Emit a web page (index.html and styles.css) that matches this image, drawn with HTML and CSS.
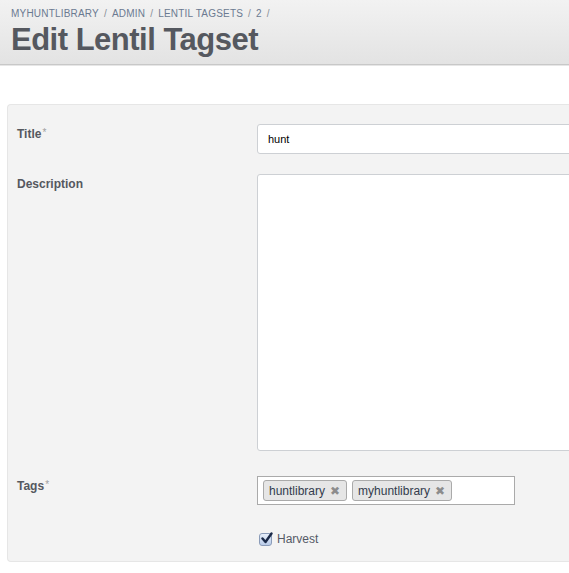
FILE: index.html
```html
<!DOCTYPE html>
<html>
<head>
<meta charset="utf-8">
<link rel="stylesheet" href="styles.css">
</head>
<body>
<header class="page-header">
  <nav class="breadcrumb">
    <a>MYHUNTLIBRARY</a><span class="sep">/</span><a>ADMIN</a><span class="sep">/</span><a>LENTIL TAGSETS</a><span class="sep">/</span><a>2</a><span class="sep">/</span>
  </nav>
  <h1 class="title">Edit Lentil Tagset</h1>
</header>
<main class="content">
  <form class="panel">
    <div class="row row-title">
      <label class="label">Title<span class="req">*</span></label>
      <div class="field"><div class="input">hunt</div></div>
    </div>
    <div class="row row-desc">
      <label class="label">Description</label>
      <div class="field"><div class="textarea"></div></div>
    </div>
    <div class="row row-tags">
      <label class="label">Tags<span class="req">*</span></label>
      <div class="field">
        <div class="tagbox">
          <span class="tag">huntlibrary<span class="x">✖</span></span>
          <span class="tag">myhuntlibrary<span class="x">✖</span></span>
        </div>
        <label class="check">
          <span class="box"><svg width="13" height="13" viewBox="0 0 13 13"><path d="M2.5 6.5 L5.5 10 L11.5 1.5" fill="none" stroke="#1a2a48" stroke-width="2.4" stroke-linecap="round" stroke-linejoin="round"/></svg></span>
          Harvest
        </label>
      </div>
    </div>
  </form>
</main>
</body>
</html>
```
FILE: styles.css
```css
* { box-sizing: border-box; }
html, body { margin: 0; padding: 0; background: #fff; }
body { font-family: "Liberation Sans", Arial, sans-serif; width: 569px; height: 573px; overflow: hidden; }
.page-header {
  height: 65px;
  background: linear-gradient(#f2f2f2, #e3e3e3);
  border-bottom: 1px solid #c8c8c8;
  box-shadow: 0 1px 0 #e6e6e6;
  padding: 8px 0 0 11px;
}
.breadcrumb { font-size: 10px; color: #6b7a91; line-height: 12px; letter-spacing: 0.2px; }
.breadcrumb .sep { margin: 0 5px; color: #8a8f97; }
.title {
  margin: 2px 0 0 0;
  font-size: 31px;
  font-weight: bold;
  color: #55585f;
  line-height: 36px;
  letter-spacing: -0.5px;
}
.content { padding: 39px 0 0 7px; }
.panel {
  background: #f3f3f3;
  border: 1px solid #e6e6e6;
  border-right: none;
  border-radius: 4px 0 0 4px;
  width: 600px;
  height: 458px;
  padding: 19px 0 0 9px;
}
.row { display: flex; }
.label {
  width: 240px;
  font-size: 12px;
  font-weight: bold;
  color: #55585f;
  padding-top: 3px;
}
.req { color: #a0a0a0; font-weight: normal; font-size: 10px; vertical-align: top; margin-left: 1px; }
.field { flex: 1; }
.input {
  height: 30px;
  background: #fff;
  border: 1px solid #cdd0d4;
  border-radius: 3px 0 0 3px;
  font-size: 11px;
  color: #000;
  padding: 8px 0 0 10px;
}
.row-desc { margin-top: 20px; }
.textarea {
  height: 277px;
  background: #fff;
  border: 1px solid #cdd0d4;
  border-radius: 3px 0 0 3px;
}
.row-tags { margin-top: 25px; }
.tagbox {
  width: 258px;
  height: 29px;
  background: #fff;
  border: 1px solid #aaa;
  padding: 3px 5px;
  display: flex;
  gap: 5px;
}
.tag {
  height: 21px;
  background: #e6e6e6;
  border: 1px solid #aaa;
  border-radius: 3px;
  font-size: 12px;
  color: #333c4d;
  padding: 3px 6px 0 5px;
  line-height: 14px;
  white-space: nowrap;
}
.tag .x { color: #8c8c8c; font-size: 12px; margin-left: 5px; }
.check {
  display: flex;
  align-items: center;
  margin: 27px 0 0 2px;
  font-size: 12px;
  color: #555a66;
}
.box {
  width: 13px; height: 13px;
  border: 1px solid #8a9bb8;
  border-radius: 3px;
  background: linear-gradient(#e6eefa, #b9cbe8);
  margin-right: 5px;
  display: inline-flex;
  position: relative;
}
.box svg { position: absolute; left: 0; top: -2px; }
```
